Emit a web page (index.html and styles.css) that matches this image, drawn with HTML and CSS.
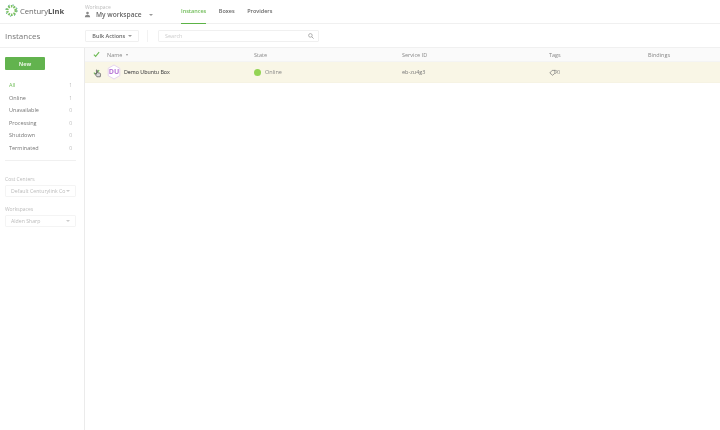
FILE: index.html
```html
<!DOCTYPE html>
<html lang="en">
<head>
<meta charset="utf-8">
<title>Instances</title>
<link rel="stylesheet" href="styles.css">
</head>
<body>
<div class="app">
  <header class="topbar">
    <div class="brand">
      <svg class="logo" viewBox="0 0 16 16" width="13" height="13">
        <circle cx="8" cy="8" r="5.2" fill="none" stroke="#7cc05f" stroke-width="3" stroke-dasharray="2 1.3"/>
        <circle cx="8" cy="8" r="7" fill="none" stroke="#3a9b80" stroke-width="1.2" stroke-dasharray="1.6 4"/>
      </svg>
      <span class="brand-name">Century<b>Link</b></span>
    </div>
    <div class="workspace">
      <span class="workspace-label">Workspace</span>
      <div class="workspace-row">
        <span class="avatar">
          <svg viewBox="0 0 8 8" width="7" height="7"><circle cx="4" cy="2.4" r="1.5" fill="#888"/><path d="M1 7c0-2 1.4-2.8 3-2.8S7 5 7 7z" fill="#888"/></svg>
        </span>
        <span class="workspace-name">My workspace</span>
        <span class="caret workspace-caret"></span>
      </div>
    </div>
    <nav class="tabs">
      <a class="tab active">Instances</a>
      <a class="tab">Boxes</a>
      <a class="tab">Providers</a>
    </nav>
  </header>
  <div class="toolbar">
    <h1 class="title">Instances</h1>
    <button class="bulk">Bulk Actions <span class="caret bulk-caret"></span></button>
    <span class="divider"></span>
    <div class="search">
      <span>Search</span>
      <svg viewBox="0 0 8 8" width="6" height="6"><circle cx="3.2" cy="3.2" r="2.4" fill="none" stroke="#999" stroke-width="1"/><path d="M5 5l2.4 2.4" stroke="#999" stroke-width="1.1"/></svg>
    </div>
  </div>
  <div class="body">
    <aside class="sidebar">
      <button class="new">New</button>
      <ul class="filters">
        <li class="filter current"><span>All</span><span class="count">1</span></li>
        <li class="filter"><span>Online</span><span class="count">1</span></li>
        <li class="filter"><span>Unavailable</span><span class="count">0</span></li>
        <li class="filter"><span>Processing</span><span class="count">0</span></li>
        <li class="filter"><span>Shutdown</span><span class="count">0</span></li>
        <li class="filter"><span>Terminated</span><span class="count">0</span></li>
      </ul>
      <hr class="rule">
      <label class="field-label">Cost Centers</label>
      <div class="select"><span class="select-text">Default Centurylink Co</span><span class="caret select-caret"></span></div>
      <label class="field-label second">Workspaces</label>
      <div class="select"><span class="select-text">Alden Sharp</span><span class="caret select-caret"></span></div>
    </aside>
    <main class="content">
      <div class="grid head">
        <span class="check-cell"><svg class="check" viewBox="0 0 8 8" width="7" height="7"><path d="M1 4.2l2 2L7 1.4" fill="none" stroke="#6dbb55" stroke-width="1.3"/></svg></span>
        <span>Name <span class="caret small"></span></span>
        <span>State</span>
        <span>Service ID</span>
        <span>Tags</span>
        <span>Bindings</span>
      </div>
      <div class="grid row">
        <span class="check-cell">
          <svg class="check" viewBox="0 0 8 8" width="7" height="7"><path d="M1 4.2l2 2L7 1.4" fill="none" stroke="#6dbb55" stroke-width="1.3"/></svg>
          <svg class="pointer" viewBox="0 0 10 11" width="8" height="9"><path d="M3 1.2c.6-.6 1.2 0 1.2.6v2.6l3 .7c.8.2 1.2.8 1 1.6L7.8 9.6H3.6L1.4 6.4c-.4-.7.4-1.3 1-.7l.8.8z" fill="#ddd" stroke="#555" stroke-width=".9"/></svg>
        </span>
        <span class="name-cell">
          <svg class="hex" viewBox="0 0 16 18" width="14" height="16"><path d="M8 1l6.6 3.8v8.4L8 17l-6.6-3.8V4.8z" fill="#fff" stroke="#e2cfee" stroke-width="1"/><text x="8" y="11.8" text-anchor="middle" class="hex-text">DU</text></svg>
          <span class="name">Demo Ubuntu Box</span>
        </span>
        <span class="state"><i class="dot"></i>Online</span>
        <span class="service">eb-zu4g3</span>
        <span class="tags">
          <svg viewBox="0 0 10 8" width="9" height="7"><path d="M.8 4.6L3.4 1.6h3.2v3.2L4 7.2z" fill="none" stroke="#777" stroke-width=".8"/><path d="M6 1.6h1.6a1.4 1.4 0 0 1 1 2.4L7 5.4" fill="none" stroke="#777" stroke-width=".7"/></svg><span class="tag-count">0</span>
        </span>
        <span></span>
      </div>
    </main>
  </div>
</div>
</body>
</html>
```
FILE: styles.css
```css
* { box-sizing: border-box; }
html, body { margin: 0; height: 100%; }
body { font-family: "Open Sans", sans-serif; font-size: 5.5px; color: #666; background: #fff; overflow: hidden; }
.app { width: 720px; height: 430px; display: flex; flex-direction: column; filter: blur(0.5px); }

.topbar { height: 24px; flex: none; display: flex; align-items: stretch; border-bottom: 1px solid #f0f0f0; }
.brand { width: 84px; padding-left: 5px; display: flex; align-items: center; gap: 2px; }
.logo { flex: none; margin-top: -2px; }
.brand-name { font-size: 7.6px; color: #666; margin-top: -2px; }
.brand-name b { font-weight: 700; color: #555; }
.workspace { width: 97px; display: flex; flex-direction: column; padding-top: 4px; }
.workspace-label { font-size: 5px; line-height: 6px; color: #bbb; padding-left: 1px; }
.workspace-row { display: flex; align-items: center; line-height: 9px; }
.avatar { width: 7px; height: 8px; display: flex; align-items: center; margin-right: 5px; }
.workspace-name { font-size: 6.6px; color: #666; font-weight: 600; }
.workspace-caret { margin-left: 7px; }
.caret { display: inline-block; width: 0; height: 0; border-left: 2px solid transparent; border-right: 2px solid transparent; border-top: 2px solid #999; vertical-align: middle; }
.caret.small { border-left-width: 1.5px; border-right-width: 1.5px; margin-left: 2px; }
.bulk-caret { margin-left: 1px; }
.select-caret { border-top-color: #ccc; margin-right: 1px; }
.tabs { display: flex; gap: 12.5px; }
.tab { font-size: 5.5px; font-weight: 600; color: #666; line-height: 22px; height: 24px; }
.tab.active { color: #6dbb55; border-bottom: 1px solid #5cb346; }

.toolbar { height: 24px; flex: none; display: flex; align-items: center; border-bottom: 1px solid #f0f0f0; }
.title { width: 85px; margin: 0; padding-left: 5px; font-size: 8px; font-weight: 400; color: #777; }
.bulk { width: 54px; height: 12px; padding: 0; background: #fff; border: 1px solid #f0f0f0; border-radius: 1px; font: 600 5.5px "Open Sans", sans-serif; color: #666; }
.divider { width: 1px; height: 12px; background: #f2f2f2; margin: 0 10px 0 8px; }
.search { width: 161px; height: 12px; border: 1px solid #f0f0f0; border-radius: 1px; padding: 0 4px 0 6px; display: flex; align-items: center; justify-content: space-between; color: #ccc; font-size: 5.5px; }

.body { flex: 1; display: flex; min-height: 0; }
.sidebar { width: 85px; flex: none; border-right: 1px solid #ebebeb; padding: 9px 9px 0 5px; }
.new { display: block; width: 40px; height: 13px; background: #62b34e; border: 0; border-radius: 1px; color: #e8f5e2; font: 700 5.5px "Open Sans", sans-serif; padding: 0; }
.filters { list-style: none; margin: 9px 0 0; padding: 0 0 0 4px; }
.filter { display: flex; justify-content: space-between; height: 12.5px; line-height: 12.5px; font-size: 5.5px; color: #777; width: 63px; }
.filter.current { color: #6dbb55; }
.count { color: #bbb; font-size: 5px; }
.rule { border: 0; border-top: 1px solid #f0f0f0; margin: 6px 0 0; width: 71px; }
.field-label { display: block; margin-top: 15px; font-size: 5px; line-height: 7px; color: #bbb; }
.field-label.second { margin-top: 9px; }
.select { width: 71px; height: 12px; margin-top: 2px; border: 1px solid #f4f4f4; border-radius: 1px; padding: 0 4px 0 5px; display: flex; align-items: center; justify-content: space-between; color: #bbb; font-size: 5.2px; }
.select-text { white-space: nowrap; }

.content { flex: 1; min-width: 0; }
.grid { display: grid; grid-template-columns: 22px 147px 148px 147px 99px 1fr; align-items: center; }
.head { height: 14px; background: #fafafa; border-bottom: 1px solid #f4f4f4; color: #888; font-size: 5.5px; }
.row { height: 21px; background: #f9f6e6; border-bottom: 1px solid #f6f3e3; font-size: 5.5px; }
.check-cell { display: flex; align-items: center; padding-left: 8px; position: relative; }
.pointer { position: absolute; left: 9px; top: 0; }
.name-cell { display: flex; align-items: center; gap: 3px; }
.hex-text { font: 700 8px "Open Sans", sans-serif; fill: #b878d8; }
.name { color: #555; font-size: 5.3px; font-weight: 400; -webkit-text-stroke: 0.1px #555; }
.state { display: flex; align-items: center; gap: 4px; color: #888; }
.dot { width: 7px; height: 7px; border-radius: 50%; background: #94d455; }
.service { color: #777; }
.tags { display: flex; align-items: center; color: #888; }
.tag-count { margin-left: -1px; }
```
